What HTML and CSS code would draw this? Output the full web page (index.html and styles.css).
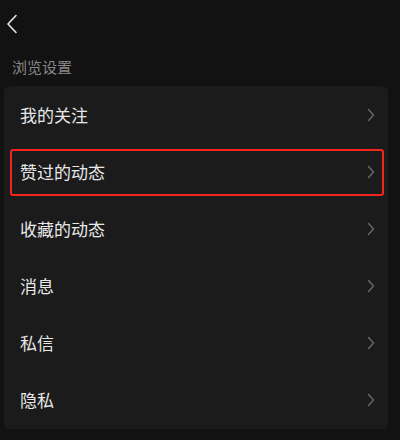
FILE: index.html
```html
<!DOCTYPE html>
<html lang="zh">
<head>
<meta charset="utf-8">
<link rel="stylesheet" href="styles.css">
</head>
<body>
<div class="page">
  <header class="topbar">
    <svg class="back" width="20" height="24" viewBox="0 0 20 24"><polyline points="10,3.5 2,12 10,20.5" fill="none" stroke="#e8e8e8" stroke-width="1.6" stroke-linecap="round" stroke-linejoin="round"/></svg>
  </header>
  <div class="section-title">浏览设置</div>
  <div class="card">
    <div class="row"><span class="label">我的关注</span><svg class="chev" width="8" height="14" viewBox="0 0 8 14"><polyline points="1.5,1.5 6.5,7 1.5,12.5" fill="none" stroke="#666" stroke-width="1.5" stroke-linecap="round" stroke-linejoin="round"/></svg></div>
    <div class="row"><span class="label">赞过的动态</span><svg class="chev" width="8" height="14" viewBox="0 0 8 14"><polyline points="1.5,1.5 6.5,7 1.5,12.5" fill="none" stroke="#666" stroke-width="1.5" stroke-linecap="round" stroke-linejoin="round"/></svg><div class="highlight"></div></div>
    <div class="row"><span class="label">收藏的动态</span><svg class="chev" width="8" height="14" viewBox="0 0 8 14"><polyline points="1.5,1.5 6.5,7 1.5,12.5" fill="none" stroke="#666" stroke-width="1.5" stroke-linecap="round" stroke-linejoin="round"/></svg></div>
    <div class="row"><span class="label">消息</span><svg class="chev" width="8" height="14" viewBox="0 0 8 14"><polyline points="1.5,1.5 6.5,7 1.5,12.5" fill="none" stroke="#666" stroke-width="1.5" stroke-linecap="round" stroke-linejoin="round"/></svg></div>
    <div class="row"><span class="label">私信</span><svg class="chev" width="8" height="14" viewBox="0 0 8 14"><polyline points="1.5,1.5 6.5,7 1.5,12.5" fill="none" stroke="#666" stroke-width="1.5" stroke-linecap="round" stroke-linejoin="round"/></svg></div>
    <div class="row"><span class="label">隐私</span><svg class="chev" width="8" height="14" viewBox="0 0 8 14"><polyline points="1.5,1.5 6.5,7 1.5,12.5" fill="none" stroke="#666" stroke-width="1.5" stroke-linecap="round" stroke-linejoin="round"/></svg></div>
  </div>
</div>
</body>
</html>
```
FILE: styles.css
```css
* { box-sizing: border-box; }
html, body { margin: 0; padding: 0; }
body {
  background: #121212;
  font-family: "Noto Sans CJK SC", "Noto Sans", sans-serif;
  width: 400px;
  height: 440px;
  overflow: hidden;
}
.page {
  display: flex;
  flex-direction: column;
  padding: 0 12px 0 4px;
}
.topbar {
  height: 46px;
  display: flex;
  align-items: center;
  padding-left: 2px;
  padding-top: 2px;
}
.back { display: block; }
.section-title {
  height: 40px;
  padding-left: 8px;
  padding-top: 11px;
  font-size: 15px;
  line-height: 20px;
  color: #878787;
}
.card {
  background: #1b1b1b;
  border-radius: 6px;
  display: flex;
  flex-direction: column;
  padding-bottom: 1px;
}
.row {
  position: relative;
  height: 57px;
  display: flex;
  align-items: center;
  justify-content: space-between;
  padding: 0 13px 0 16px;
}
.label {
  font-size: 17px;
  color: #e8e8e8;
  line-height: 24px;
}
.chev { display: block; }
.highlight {
  position: absolute;
  left: 6px;
  right: 4px;
  top: 6px;
  height: 47px;
  border: 2px solid #f5241c;
  border-radius: 3px;
}
```
